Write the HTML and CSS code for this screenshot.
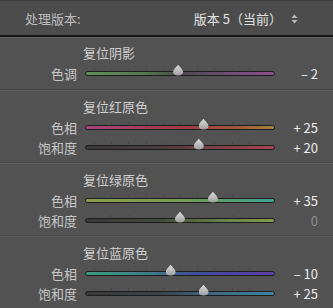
FILE: index.html
```html
<!DOCTYPE html>
<html lang="zh-CN">
  <head>
    <meta charset="UTF-8" />
    <meta name="viewport" content="width=device-width, initial-scale=1.0" />
    <title>校准</title>
    <link rel="stylesheet" href="styles.css">
  </head>
  <body>
    <div class="panel">
      <div class="process-row">
        <span class="process-label">处理版本:</span>
        <span class="process-select">
          版本 5（当前）
          <svg class="updown" width="7" height="10" viewBox="0 0 7 10">
            <path d="M3.5 0.5 L6.5 4 L0.5 4 Z" fill="#b8b8b8" />
            <path d="M3.5 9.5 L6.5 6 L0.5 6 Z" fill="#b8b8b8" />
          </svg>
        </span>
      </div>

      <div class="group group-first">
        <div class="group-title">复位阴影</div>
        <div class="slider-row">
          <span class="slider-label">色调</span>
          <span class="track shadow-tint">
            <span class="thumb" style="left: 49%"></span>
          </span>
          <span class="slider-value">– 2</span>
        </div>
      </div>

      <div class="group">
        <div class="group-title">复位红原色</div>
        <div class="slider-row">
          <span class="slider-label">色相</span>
          <span class="track red-hue">
            <span class="thumb" style="left: 62.5%"></span>
          </span>
          <span class="slider-value">+ 25</span>
        </div>
        <div class="slider-row">
          <span class="slider-label">饱和度</span>
          <span class="track red-sat">
            <span class="thumb" style="left: 60%"></span>
          </span>
          <span class="slider-value">+ 20</span>
        </div>
      </div>

      <div class="group">
        <div class="group-title">复位绿原色</div>
        <div class="slider-row">
          <span class="slider-label">色相</span>
          <span class="track green-hue">
            <span class="thumb" style="left: 67.5%"></span>
          </span>
          <span class="slider-value">+ 35</span>
        </div>
        <div class="slider-row">
          <span class="slider-label">饱和度</span>
          <span class="track green-sat">
            <span class="thumb" style="left: 50%"></span>
          </span>
          <span class="slider-value zero">0</span>
        </div>
      </div>

      <div class="group">
        <div class="group-title">复位蓝原色</div>
        <div class="slider-row">
          <span class="slider-label">色相</span>
          <span class="track blue-hue">
            <span class="thumb" style="left: 45%"></span>
          </span>
          <span class="slider-value">– 10</span>
        </div>
        <div class="slider-row">
          <span class="slider-label">饱和度</span>
          <span class="track blue-sat">
            <span class="thumb" style="left: 62.5%"></span>
          </span>
          <span class="slider-value">+ 25</span>
        </div>
      </div>
    </div>
  </body>
</html>
```
FILE: styles.css
```css
body {
  margin: 0;
  background-color: #525252;
  font-family: "Noto Sans CJK SC", "Noto Sans", sans-serif;
  font-size: 13px;
  color: #c4c4c4;
}

.panel {
  width: 333px;
  height: 308px;
  overflow: hidden;
}

.process-row {
  display: flex;
  align-items: center;
  justify-content: space-between;
  height: 34px;
  padding: 0 35px 0 25px;
  background-color: #4c4c4c;
  border-top: 1px solid #3e3e3e;
  border-bottom: 2px solid #161616;
  box-shadow: 0 1px 0 #5e5e5e;
}

.process-label {
  color: #bdbdbd;
}

.process-select {
  display: flex;
  align-items: center;
  gap: 9px;
  color: #e2e2e2;
}

.updown {
  display: block;
  margin-top: 1px;
}

.group {
  padding: 8px 0 5px;
  border-top: 1px solid #474747;
  box-shadow: inset 0 1px 0 #5a5a5a;
}

.group-first {
  padding: 6px 0 6px;
  border-top: none;
  box-shadow: none;
  margin-top: 1px;
}

.group-title {
  height: 18px;
  line-height: 18px;
  padding-left: 83px;
  margin-bottom: 1px;
  color: #cfcfcf;
}

.slider-row {
  display: flex;
  align-items: center;
  height: 20px;
}

.slider-label {
  width: 77px;
  text-align: right;
  color: #c6c6c6;
}

.track {
  position: relative;
  width: 188px;
  height: 3px;
  margin-left: 8px;
  border: 1px solid #1c1c1c;
  border-radius: 3px;
}

/* tick marks above the track */
.track::before {
  content: "";
  position: absolute;
  left: 8px;
  right: 8px;
  top: -4px;
  height: 2px;
  background: repeating-linear-gradient(90deg, #454545 0 1px, transparent 1px 17.2px);
}

.thumb {
  position: absolute;
  top: -7px;
  width: 10px;
  height: 11px;
  margin-left: -5px;
  background: linear-gradient(#dcdcdc, #9c9c9c);
  clip-path: path("M5 0 C6 2 10 5 10 7.5 C10 9.8 8 11 5 11 C2 11 0 9.8 0 7.5 C0 5 4 2 5 0 Z");
}

.slider-value {
  flex: 1;
  text-align: right;
  padding-right: 15px;
  color: #ececec;
}

.slider-value.zero {
  color: #8c8c8c;
}

.shadow-tint {
  background: linear-gradient(90deg, #5f9158 0%, #557a50 30%, #4a4a4a 50%, #5e4c62 62%, #8c4e92 100%);
}

.red-hue {
  background: linear-gradient(90deg, #a8447a 0%, #a23e50 40%, #a03c44 55%, #a0583e 80%, #a08440 100%);
}

.red-sat {
  background: linear-gradient(90deg, #383838 0%, #4a3c3e 40%, #804048 70%, #a84458 100%);
}

.green-hue {
  background: linear-gradient(90deg, #8a9c4c 0%, #7c9c54 45%, #5c9c68 70%, #3ca492 100%);
}

.green-sat {
  background: linear-gradient(90deg, #383838 0%, #444a3e 40%, #667e48 70%, #7e9e4c 100%);
}

.blue-hue {
  background: linear-gradient(90deg, #3c9c80 0%, #3e7c8a 35%, #3e5498 55%, #4a46a0 75%, #6040a8 100%);
}

.blue-sat {
  background: linear-gradient(90deg, #383838 0%, #3c4448 40%, #3e6a84 70%, #3e84a2 100%);
}
```
